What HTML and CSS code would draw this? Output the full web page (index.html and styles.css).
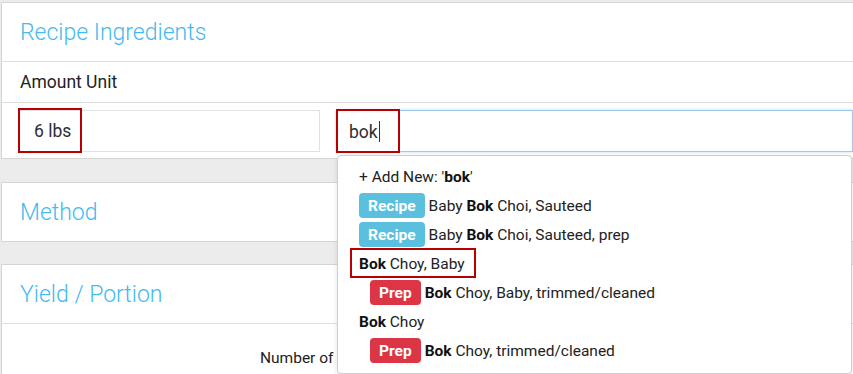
FILE: index.html
```html
<!DOCTYPE html>
<html>
<head>
<meta charset="utf-8">
<link rel="stylesheet" href="styles.css">
</head>
<body>
<div class="page">
  <section class="panel">
    <div class="panel-head">Recipe Ingredients</div>
    <div class="row-label">Amount Unit</div>
    <div class="inputs">
      <div class="field field-amount">
        <span class="field-text">6 lbs</span>
        <span class="hl hl-amount"></span>
      </div>
      <div class="field field-search">
        <span class="field-text">bok<span class="caret"></span></span>
        <span class="hl hl-search"></span>
        <ul class="dropdown">
          <li class="item">+ Add New: '<b>bok</b>'</li>
          <li class="item"><span class="badge badge-recipe">Recipe</span><span>Baby <b>Bok</b> Choi, Sauteed</span></li>
          <li class="item"><span class="badge badge-recipe">Recipe</span><span>Baby <b>Bok</b> Choi, Sauteed, prep</span></li>
          <li class="item"><span><b>Bok</b> Choy, Baby</span><span class="hl hl-item"></span></li>
          <li class="item item-sub"><span class="badge badge-prep">Prep</span><span><b>Bok</b> Choy, Baby, trimmed/cleaned</span></li>
          <li class="item"><span><b>Bok</b> Choy</span></li>
          <li class="item item-sub"><span class="badge badge-prep">Prep</span><span><b>Bok</b> Choy, trimmed/cleaned</span></li>
        </ul>
      </div>
    </div>
  </section>
  <section class="panel panel-gap">
    <div class="panel-head panel-head-only">Method</div>
  </section>
  <section class="panel panel-gap2">
    <div class="panel-head">Yield / Portion</div>
    <div class="yield-body">
      <span class="yield-label">Number of</span>
    </div>
  </section>
</div>
</body>
</html>
```

FILE: styles.css
```css
html, body {
  margin: 0;
  padding: 0;
}
body {
  background: #ececec;
  font-family: Roboto, "Liberation Sans", Arial, sans-serif;
  color: #212529;
  overflow: hidden;
  width: 853px;
  height: 374px;
}
.page {
  padding-top: 2px;
  padding-left: 1px;
  width: 880px;
}
.panel {
  background: #fff;
  border: 1px solid #d5d5d5;
}
.panel-gap { margin-top: 23px; }
.panel-gap2 { margin-top: 22px; }
.panel-head {
  height: 59px;
  box-sizing: border-box;
  padding-left: 18px;
  display: flex;
  align-items: center;
  font-size: 23px;
  font-weight: 300;
  color: #45b9f0;
  border-bottom: 1px solid #dedede;
}
.panel-head-only {
  height: 58px;
  border-bottom: none;
}
.row-label {
  height: 41px;
  box-sizing: border-box;
  padding-left: 18px;
  display: flex;
  align-items: center;
  font-size: 17.5px;
  color: #222;
  border-bottom: 1px solid #dedede;
}
.inputs {
  display: flex;
  gap: 16px;
  padding: 7px 0 6px 16px;
}
.field {
  position: relative;
  height: 42px;
  box-sizing: border-box;
  border: 1px solid #dfe3e8;
  display: flex;
  align-items: center;
  font-size: 17.5px;
  color: #2a2f33;
}
.field-amount {
  width: 302px;
  padding-left: 15px;
}
.field-search {
  width: 517px;
  padding-left: 12px;
  border-color: #9cc7f3;
  box-shadow: 0 0 3px rgba(120, 170, 230, 0.45);
}
.caret {
  display: inline-block;
  width: 1px;
  height: 21px;
  background: #333;
  vertical-align: -4px;
  margin-left: 1px;
}
.hl {
  position: absolute;
  border: 2px solid #b80000;
  box-sizing: border-box;
  pointer-events: none;
}
.hl-amount {
  left: -1px;
  top: -3px;
  width: 64px;
  height: 45px;
}
.hl-search {
  left: -1px;
  top: -2px;
  width: 64px;
  height: 44px;
}
.dropdown {
  position: absolute;
  left: 0;
  top: 44px;
  width: 515px;
  height: 219px;
  box-sizing: border-box;
  margin: 0;
  padding: 6px 0 0 21px;
  list-style: none;
  background: #fff;
  border: 1px solid #d0d0d0;
  border-radius: 4px;
  box-shadow: 0 2px 5px rgba(0, 0, 0, 0.12);
  z-index: 5;
}
.item {
  position: relative;
  height: 29px;
  display: flex;
  align-items: center;
  font-size: 15.5px;
  color: #222;
  white-space: nowrap;
}
.item b { font-weight: 700; color: #111; }
.item-sub { padding-left: 11px; }
.badge {
  display: inline-flex;
  align-items: center;
  justify-content: center;
  height: 25px;
  padding: 0 9px;
  margin-right: 4px;
  border-radius: 4px;
  color: #fff;
  font-weight: 700;
  font-size: 15.5px;
}
.badge-recipe { background: #5bc0de; }
.badge-prep { background: #dc3545; }
.hl-item {
  left: -9px;
  top: -1px;
  width: 126px;
  height: 30px;
}
.yield-body {
  height: 60px;
  padding-left: 258px;
  padding-top: 24px;
  box-sizing: border-box;
}
.yield-label {
  font-size: 15.5px;
  line-height: 18px;
  color: #222;
}
```
